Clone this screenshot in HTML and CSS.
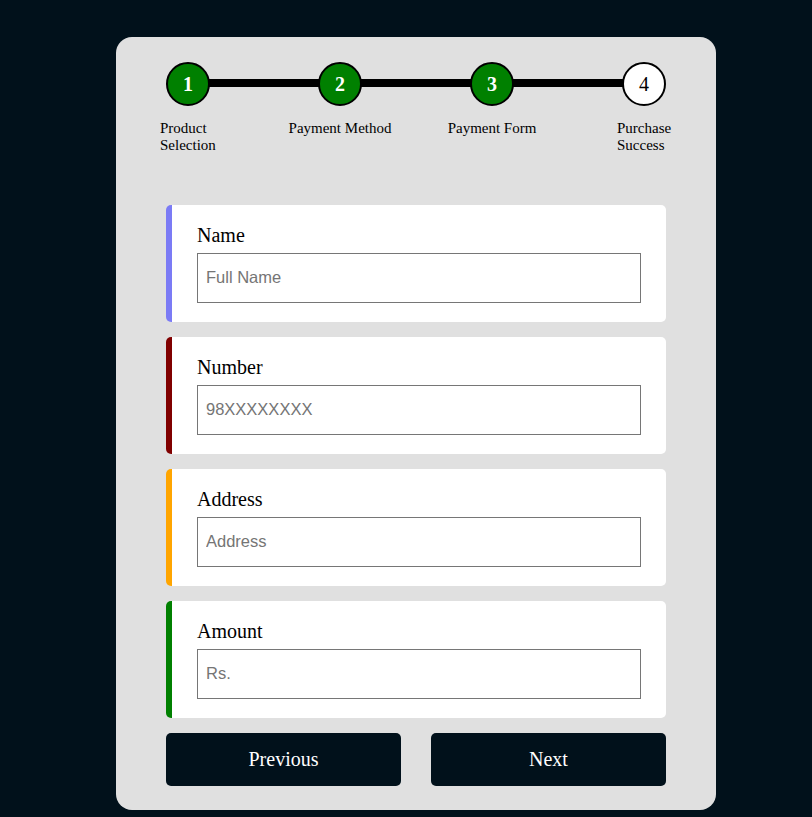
FILE: index.html
```html
<!DOCTYPE html>
<html>
<head>
<meta charset="utf-8">
<link rel="stylesheet" href="styles.css">
</head>
<body>
<div class="panel">
  <div class="stepper">
    <div class="step">
      <div class="circle done">1</div>
      <div class="label wrap">Product Selection</div>
    </div>
    <div class="step">
      <div class="circle done">2</div>
      <div class="label">Payment Method</div>
    </div>
    <div class="step">
      <div class="circle done">3</div>
      <div class="label">Payment Form</div>
    </div>
    <div class="step">
      <div class="circle">4</div>
      <div class="label wrap">Purchase Success</div>
    </div>
  </div>

  <form class="form">
    <div class="field field-name">
      <label class="field-label">Name</label>
      <input class="field-input" type="text" placeholder="Full Name">
    </div>
    <div class="field field-number">
      <label class="field-label">Number</label>
      <input class="field-input" type="text" placeholder="98XXXXXXXX">
    </div>
    <div class="field field-address">
      <label class="field-label">Address</label>
      <input class="field-input" type="text" placeholder="Address">
    </div>
    <div class="field field-amount">
      <label class="field-label">Amount</label>
      <input class="field-input" type="text" placeholder="Rs.">
    </div>
    <div class="actions">
      <button type="button" class="btn">Previous</button>
      <button type="button" class="btn">Next</button>
    </div>
  </form>
</div>
</body>
</html>
```

FILE: styles.css
```css
html, body {
  margin: 0;
  padding: 0;
}
body {
  background: #01111b;
  font-family: "Liberation Serif", "Times New Roman", serif;
  color: #000;
  min-height: 817px;
}
.panel {
  box-sizing: border-box;
  width: 600px;
  margin: 37px 0 0 116px;
  padding: 25px 50px 24px;
  background: #e0e0e0;
  border-radius: 16px;
}
.stepper {
  position: relative;
  display: flex;
  justify-content: space-between;
  height: 143px;
}
.stepper::before {
  content: "";
  position: absolute;
  left: 22px;
  right: 22px;
  top: 17px;
  height: 8px;
  background: #000;
}
.step {
  position: relative;
  width: 44px;
  display: flex;
  flex-direction: column;
  align-items: center;
}
.circle {
  box-sizing: border-box;
  width: 44px;
  height: 44px;
  border: 2px solid #000;
  border-radius: 50%;
  background: #fff;
  display: flex;
  align-items: center;
  justify-content: center;
  font-size: 20px;
}
.circle.done {
  background: #008000;
  color: #fff;
  font-weight: bold;
}
.label {
  margin-top: 14px;
  font-size: 15px;
  line-height: 17px;
  white-space: nowrap;
  text-align: center;
}
.label.wrap {
  white-space: normal;
  width: 56px;
  text-align: left;
  padding-left: 2px;
}
.step:first-child .label.wrap {
  padding-left: 0;
  margin-left: 0;
}
.form {
  display: flex;
  flex-direction: column;
  gap: 15px;
  margin: 0;
}
.field {
  box-sizing: border-box;
  height: 117px;
  background: #fff;
  border-radius: 5px;
  border-left: 6px solid #7b7bf5;
  padding: 19px 25px 0 25px;
  display: flex;
  flex-direction: column;
}
.field-number { border-left-color: #800000; }
.field-address { border-left-color: #ffa500; }
.field-amount { border-left-color: #008000; }
.field-label {
  font-size: 20px;
  line-height: 23px;
  margin-bottom: 6px;
}
.field-input {
  box-sizing: border-box;
  width: 100%;
  height: 50px;
  border: 1px solid #767676;
  border-radius: 0;
  padding: 0 8px 1px;
  font-family: "Liberation Sans", Arial, sans-serif;
  font-size: 16.5px;
  color: #000;
  background: #fff;
  outline: none;
}
.field-input::placeholder {
  color: #757575;
}
.actions {
  display: flex;
  gap: 30px;
}
.btn {
  flex: 1;
  height: 53px;
  border: none;
  border-radius: 5px;
  background: #01111b;
  color: #fff;
  font-family: "Liberation Serif", "Times New Roman", serif;
  font-size: 20px;
  cursor: pointer;
}
```
